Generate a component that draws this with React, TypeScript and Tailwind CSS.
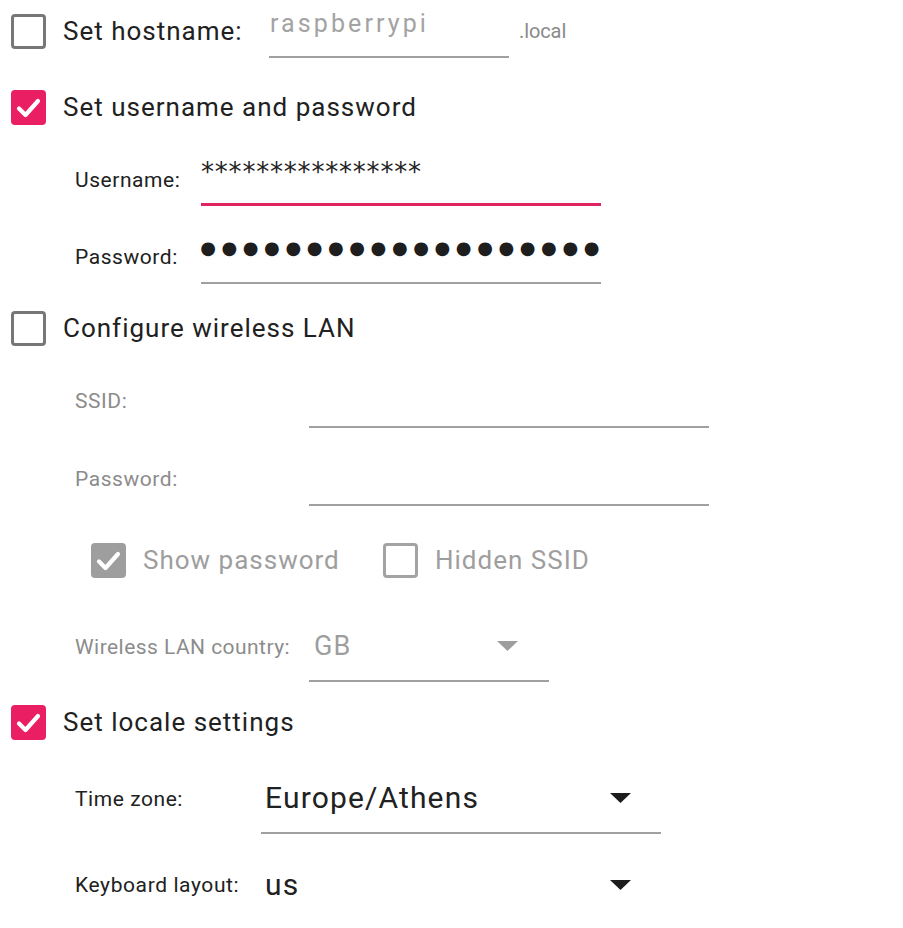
import React from 'react'

type CheckProps = {
  checked?: boolean
  disabled?: boolean
}

function Check({ checked = false, disabled = false }: CheckProps) {
  const box = checked
    ? disabled
      ? 'bg-[#9e9e9e]'
      : 'bg-[#e91e63]'
    : disabled
      ? 'border-[3px] border-[#a3a3a3]'
      : 'border-[3px] border-[#777777]'

  return (
    <div className={`w-[35px] h-[35px] rounded-[4px] shrink-0 flex items-center justify-center ${box}`}>
      {checked && (
        <svg width="35" height="35" viewBox="0 0 35 35" fill="none">
          <path d="M8 18.5 L14.5 25 L27 11" stroke="white" strokeWidth="4.2" strokeLinecap="round" strokeLinejoin="round" />
        </svg>
      )}
    </div>
  )
}

function Caret({ disabled = false }: { disabled?: boolean }) {
  return (
    <svg width="21" height="10" viewBox="0 0 21 10" className="shrink-0">
      <path d="M0 0 H21 L10.5 10 Z" fill={disabled ? '#9e9e9e' : '#1c1c1c'} />
    </svg>
  )
}

const font = { fontFamily: 'Roboto, "Noto Sans", sans-serif' }
const mono = { fontFamily: '"DejaVu Sans", Verdana, sans-serif' }

export default function App() {
  return (
    <div className="w-[903px] h-[928px] bg-white overflow-hidden text-[#212121]" style={font}>
      {/* hostname */}
      <div className="flex items-center h-[62px] pl-[11px]">
        <Check />
        <span className="ml-[17px] w-[206px] text-[26px] leading-none tracking-[1px]">Set hostname:</span>
        <div className="self-start w-[240px] h-[58px] border-b-2 border-[#a0a0a0] pt-[11px] pl-[1px]">
          <span className="text-[25px] leading-none tracking-[3.1px] text-[#a3a3a3]">raspberrypi</span>
        </div>
        <span className="ml-[10px] text-[20px] leading-none text-[#8a8a8a] tracking-[-0.1px]">.local</span>
      </div>

      {/* username / password */}
      <div className="flex items-center h-[60px] mt-[15px] pl-[11px]">
        <Check checked />
        <span className="ml-[17px] text-[26px] leading-none tracking-[1px]">Set username and password</span>
      </div>

      <div className="flex items-center h-[52px] mt-[17px] pl-[75px]">
        <span className="w-[126px] text-[21px] leading-none tracking-[0.55px]">Username:</span>
        <div className="w-[400px] h-full border-b-[3px] border-[#e0245f] pt-[5px]">
          <div className="text-[26px] leading-none text-[#222] tracking-[0.8px]" style={mono}>
            ****************
          </div>
        </div>
      </div>

      <div className="flex items-center h-[54px] mt-[24px] pl-[75px]">
        <span className="w-[126px] text-[21px] leading-none tracking-[0.55px]">Password:</span>
        <div className="w-[400px] h-full border-b-2 border-[#a0a0a0] pt-[9px] flex justify-end overflow-hidden">
          <div className="text-[18px] leading-none text-[#1e1e1e] whitespace-nowrap tracking-[5.6px] mr-[-4px]" style={mono}>
            ●●●●●●●●●●●●●●●●●●●●●
          </div>
        </div>
      </div>

      {/* wireless */}
      <div className="flex items-center h-[60px] mt-[14px] pl-[11px]">
        <Check />
        <span className="ml-[17px] text-[26px] leading-none tracking-[1px]">Configure wireless LAN</span>
      </div>

      <div className="flex items-center h-[54px] mt-[16px] pl-[75px] text-[#8c8c8c]">
        <span className="w-[234px] text-[21px] leading-none tracking-[0.55px]">SSID:</span>
        <div className="w-[400px] h-full border-b-2 border-[#a0a0a0]" />
      </div>

      <div className="flex items-center h-[54px] mt-[24px] pl-[75px] text-[#8c8c8c]">
        <span className="w-[234px] text-[21px] leading-none tracking-[0.55px]">Password:</span>
        <div className="w-[400px] h-full border-b-2 border-[#a0a0a0]" />
      </div>

      <div className="flex items-center h-[60px] mt-[24px] pl-[91px] text-[#9e9e9e]">
        <Check checked disabled />
        <span className="ml-[17px] w-[240px] text-[26px] leading-none tracking-[1px]">Show password</span>
        <Check disabled />
        <span className="ml-[17px] text-[26px] leading-none tracking-[1px]">Hidden SSID</span>
      </div>

      <div className="flex items-center h-[70px] mt-[22px] pl-[75px] text-[#8c8c8c]">
        <span className="w-[234px] text-[21px] leading-none tracking-[0.45px]">Wireless LAN country:</span>
        <div className="w-[240px] h-full border-b-2 border-[#a0a0a0] flex items-center pl-[5px] pr-[31px]">
          <span className="flex-1 text-[27px] leading-none text-[#9e9e9e] tracking-[1px]">GB</span>
          <Caret disabled />
        </div>
      </div>

      {/* locale */}
      <div className="flex items-center h-[60px] mt-[10px] pl-[11px]">
        <Check checked />
        <span className="ml-[17px] text-[26px] leading-none tracking-[1px]">Set locale settings</span>
      </div>

      <div className="flex items-center h-[70px] mt-[12px] pl-[75px]">
        <span className="w-[186px] text-[21px] leading-none tracking-[0.55px]">Time zone:</span>
        <div className="w-[400px] h-full border-b-2 border-[#a0a0a0] flex items-center pl-[4px] pr-[30px]">
          <span className="flex-1 text-[30px] leading-none tracking-[1.15px]">Europe/Athens</span>
          <Caret />
        </div>
      </div>

      <div className="flex items-center h-[70px] mt-[16px] pl-[75px]">
        <span className="w-[186px] text-[21px] leading-none tracking-[0.6px]">Keyboard layout:</span>
        <div className="w-[400px] h-full flex items-center pl-[4px] pr-[30px]">
          <span className="flex-1 text-[30px] leading-none tracking-[1.15px]">us</span>
          <Caret />
        </div>
      </div>
    </div>
  )
}
